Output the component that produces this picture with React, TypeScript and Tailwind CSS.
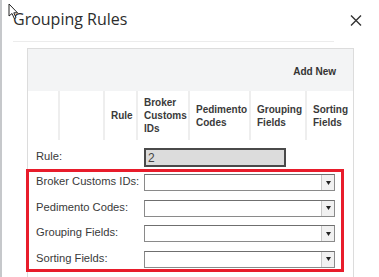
const COLS = [
  { w: 'w-[32px]', label: [] as string[] },
  { w: 'w-[45px]', label: [] as string[] },
  { w: 'w-[33px]', label: ['Rule'] },
  { w: 'w-[52px]', label: ['Broker', 'Customs', 'IDs'] },
  { w: 'w-[61px]', label: ['Pedimento', 'Codes'] },
  { w: 'w-[56px]', label: ['Grouping', 'Fields'] },
  { w: 'w-[46px]', label: ['Sorting', 'Fields'] },
]

const FIELDS = ['Broker Customs IDs:', 'Pedimento Codes:', 'Grouping Fields:', 'Sorting Fields:']

function Cursor() {
  return (
    <svg className="absolute left-[6px] top-[3px]" width="12" height="17" viewBox="0 0 12 17">
      <path
        d="M1 1 L1 13 L4 10.5 L6.3 15.5 L8 14.7 L5.8 9.8 L9.5 9.8 Z"
        fill="#fff"
        stroke="#222"
        strokeWidth="1"
        strokeLinejoin="round"
      />
    </svg>
  )
}

function Select() {
  return (
    <div className="flex h-[17px] w-[191px] shrink-0 border border-[#8a8a8a] border-t-[#6f6f6f] bg-white">
      <div className="flex-1" />
      <div className="flex w-[13px] items-center justify-center border-l border-[#c8c8c8] bg-[#f1f1f1]">
        <svg width="5" height="4" viewBox="0 0 5 4">
          <path d="M0 0 L5 0 L2.5 4 Z" fill="#222" />
        </svg>
      </div>
    </div>
  )
}

export default function App() {
  return (
    <div className="relative h-[277px] w-[379px] overflow-hidden border-l-2 border-[#c6c8cb] bg-white font-['Liberation_Sans',Arial,sans-serif] text-[#333]">
      <Cursor />

      {/* dialog header */}
      <div className="ml-[11px] mr-[45px] flex h-[42px] items-start justify-between border-b border-[#ececec] pt-[7px]">
        <span className="font-['Open_Sans',sans-serif] text-[16px] leading-[24px] text-[#2d2d2d]">Grouping Rules</span>
      </div>
      <svg className="absolute left-[348px] top-[15px]" width="12" height="11" viewBox="0 0 12 11">
        <path d="M1 0.5 L11 10.5 M11 0.5 L1 10.5" stroke="#333" strokeWidth="1.4" />
      </svg>

      {/* panel */}
      <div className="ml-[25px] mt-[6px] w-[327px] border-x border-t border-[#dcdcdc]">
        <div className="flex h-[42px] items-center justify-end bg-[#f3f4f5] pr-[17px] pt-[2px] text-[10px] font-bold text-[#333]">
          Add New
        </div>

        <div className="flex h-[49px]">
          {COLS.map((c, i) => (
            <div
              key={i}
              className={`${c.w} flex flex-col justify-center pl-[6px] text-[10px] font-bold leading-[13px] text-[#3a3a3a] ${
                i < COLS.length - 1 ? 'border-r-2 border-[#eeeeee]' : ''
              }`}
            >
              {c.label.map((l) => (
                <span key={l}>{l}</span>
              ))}
            </div>
          ))}
        </div>

        <div className="flex h-[29px] items-start pt-[8px] text-[11.2px]">
          <span className="w-[116px] pl-[8px] text-[#3a3a3a]">Rule:</span>
          <div className="flex h-[19px] w-[142px] items-center border-2 border-[#4a4a4a] bg-[#dcdcdc] pl-[2px] text-[12px] text-[#444]">
            2
          </div>
        </div>

        <div className="-ml-[2px] flex h-[103px] w-[318px] flex-col gap-[8.6px] border-[3px] border-[#e81c2b] pt-[2px]">
          {FIELDS.map((f) => (
            <div key={f} className="flex items-start">
              <span className="w-[115px] shrink-0 whitespace-nowrap pl-[7px] text-[11.2px] leading-[14px] text-[#3a3a3a]">{f}</span>
              <Select />
            </div>
          ))}
        </div>
        <div className="h-[10px]" />
      </div>
    </div>
  )
}
